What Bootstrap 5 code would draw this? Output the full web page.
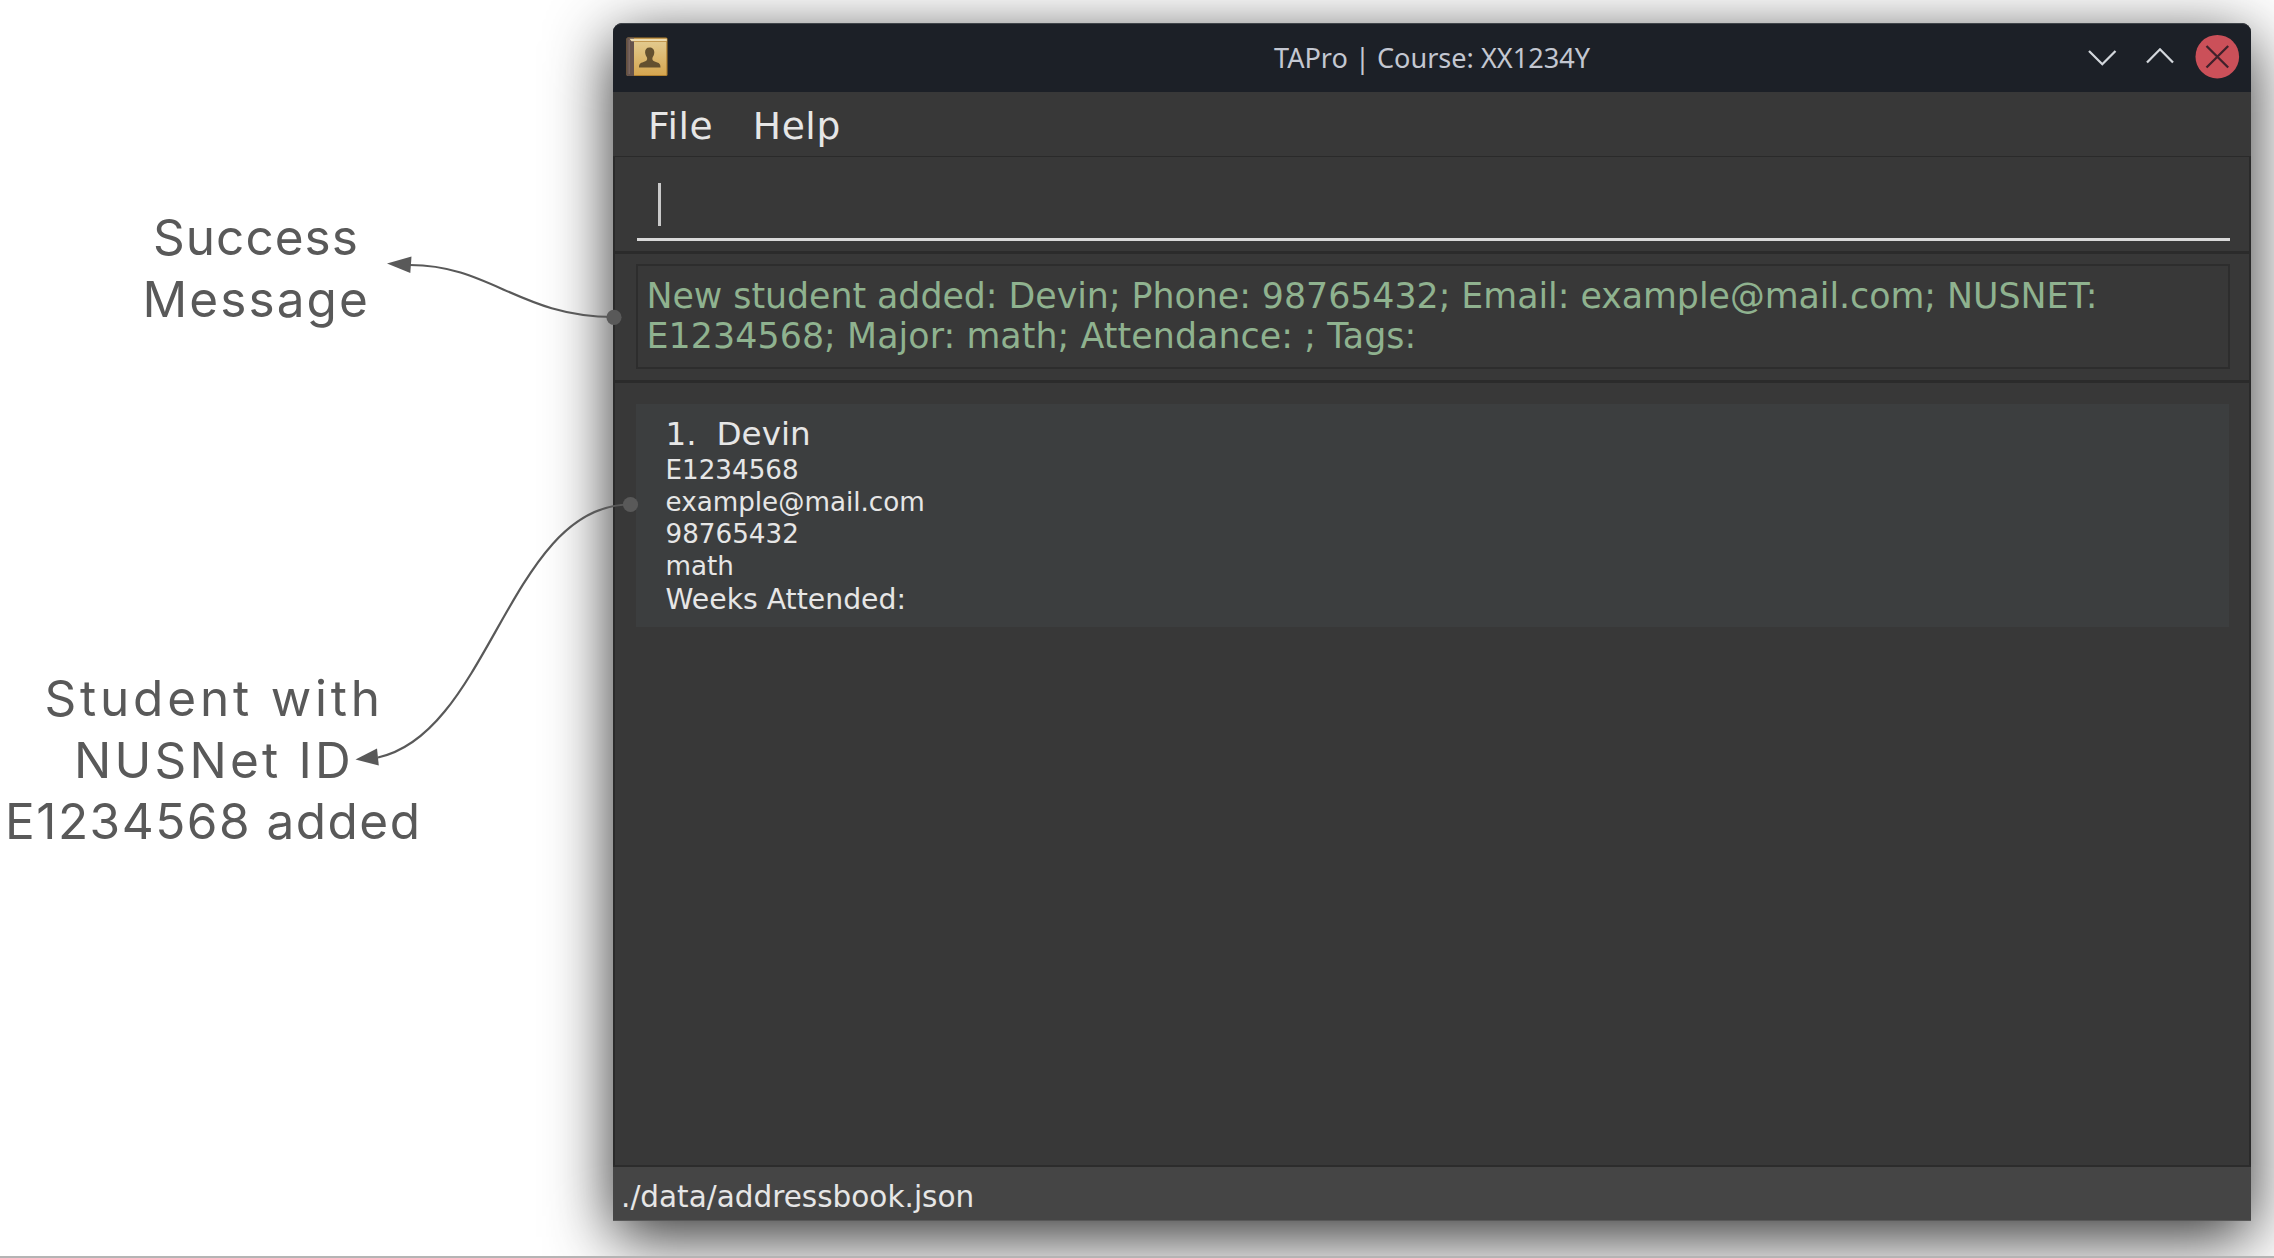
<!DOCTYPE html>
<html lang="en">
<head>
<meta charset="utf-8">
<title>TAPro</title>
<link href="https://cdn.jsdelivr.net/npm/bootstrap@5.3.0/dist/css/bootstrap.min.css" rel="stylesheet">
<script src="https://cdn.jsdelivr.net/npm/bootstrap@5.3.0/dist/js/bootstrap.bundle.min.js"></script>
<style>
  body { background: #fff; height: 1258px; font-family: "DejaVu Sans", sans-serif; }
  .stage { height: 1258px; border-bottom: 2px solid #b4b4b4; }
  .notes { width: 613px; font: 400 49.5px/61.5px "Inter", sans-serif; color: #595959; }
  .notes div { white-space: pre; }
  .note-success { padding-top: 207px; }
  .note-student { padding-top: 338px; }
  .n1 { padding-left: 153px; letter-spacing: 1.03px; }
  .n2 { padding-left: 142.5px; letter-spacing: 2.1px; }
  .n3 { padding-left: 44.5px; letter-spacing: 3.8px; }
  .n4 { padding-left: 74px; letter-spacing: 3.2px; }
  .n5 { padding-left: 5px; letter-spacing: 1.5px; }
  .app { width: 1638px; height: 1198px; margin-top: 23px; background: #383838; color: #e6e6e6;
         border-radius: 9px 9px 0 0; box-shadow: 0 16px 64px rgba(0,0,0,.82); }
  .titlebar { height: 69px; background: #1c2027; border-top: 1px solid #40454a; border-radius: 9px 9px 0 0;
              font: 27.1px/68px "Noto Sans", sans-serif; color: #c3c7d1; }
  .side { width: 182px; }
  .menu { height: 64px; padding: 4px 0 0 35px; gap: 39.5px; font-size: 37.6px; letter-spacing: .6px; }
  .panes { border: 1px solid #2a2a2a; border-width: 1px 2px 1px; border-bottom: 2px solid #2c2c2c; }
  .command { height: 94px; padding: 0 19px 10px 22px; border-bottom: 0; }
  .entry { height: 84px; border-bottom: 3px solid #d9d9d9; padding: 26px 0 0 21px; }
  .caret { width: 2.5px; height: 43px; background: #c9c9c9; }
  .split { height: 3px; background: #2b2b2b; }
  .result { height: 126px; padding: 10px 19px 11px 21px; }
  .result-box { height: 105px; border: 2px solid #2d2d2d; padding: 10px 8.5px; font-size: 34.8px; line-height: 40.2px; color: #8fb28f; }
  .line-a { letter-spacing: -.04px; }
  .line-b { letter-spacing: .08px; }
  .list-pane { padding: 21px 20px 0 21px; }
  .student { height: 223px; background: #3c3e3f; padding: 10px 0 0 29.5px; font-size: 26.2px; line-height: 32px; }
  .student-name { font-size: 32.6px; line-height: 40px; }
  .num { width: 51px; }
  .weeks { font-size: 28.3px; line-height: 36px; }
  .status { height: 54px; background: #454545; border-bottom: 1px solid #585858; padding: 7px 0 0 8px; font-size: 29.5px; line-height: 47px; }
</style>
</head>
<body class="overflow-hidden">
<div class="stage d-flex position-relative overflow-hidden">
  <aside class="notes flex-shrink-0">
    <div class="note-success"><div class="n1">Success</div><div class="n2">Message</div></div>
    <div class="note-student"><div class="n3">Student with</div><div class="n4">NUSNet ID</div><div class="n5">E1234568 added</div></div>
  </aside>
  <main class="app flex-shrink-0 d-flex flex-column">
    <header class="titlebar d-flex justify-content-between">
      <div class="side">
        <svg class="d-block" width="60" height="68" viewBox="0 0 60 68">
          <defs><linearGradient id="cover" x2="0" y2="1"><stop stop-color="#e2c98d"/><stop offset="1" stop-color="#d5a650"/></linearGradient></defs>
          <rect x="13.500" y="13.500" width="41" height="38.500" rx="1.500" fill="#b38230"/>
          <path d="M15 13.500H21V52H15q-1.500 0-1.500-1.500V15q0-1.500 1.500-1.500z" fill="#65534c"/>
          <rect x="15.500" y="16" width="1.500" height="34" fill="#79665f"/>
          <rect x="21" y="18" width="32.300" height="33" fill="url(#cover)"/>
          <path d="M16.500 14.800H53.800V17.200H18.500Z" fill="#eddcb0"/>
          <path d="M36.500 23.500c-3 0-4.600 2-4.400 5 .2 2.500 1.400 4 2 5.500.4 2-.6 3-3.600 4-3.500 1.200-4.500 2-4.500 5.500h21.500c0-3.500-1-4.300-4.500-5.500-3-1-4-2-3.600-4 .6-1.500 1.800-3 1.900-5.500.1-3-1.800-5-4.800-5z" fill="#63502f"/>
        </svg>
      </div>
      <div>TAPro | Course: XX1234Y</div>
      <div class="side">
        <svg class="d-block" width="182" height="68" viewBox="0 0 182 68" fill="none" stroke="#d3d7dc" stroke-width="2.3">
          <path d="M20 27L33.300 40.200L46.500 27M78 38.500L91 25.300L104 38.500"/>
          <circle cx="148.300" cy="32.700" r="21.800" fill="#cb5059" stroke="none"/>
          <path d="M137.500 22L159.200 43.500M159.200 22L137.500 43.500" stroke="#40212b"/>
        </svg>
      </div>
    </header>
    <nav class="menu d-flex align-items-center"><span>File</span><span>Help</span></nav>
    <section class="panes flex-grow-1">
      <div class="command"><div class="entry"><div class="caret"></div></div></div>
      <div class="split"></div>
      <div class="result"><div class="result-box"><div class="line-a text-nowrap">New student added: Devin; Phone: 98765432; Email: example@mail.com; NUSNET:</div><div class="line-b">E1234568; Major: math; Attendance: ; Tags:</div></div></div>
      <div class="split"></div>
      <div class="list-pane">
        <article class="student">
          <div class="student-name d-flex"><span class="num">1.</span><span>Devin</span></div>
          <div>E1234568</div><div>example@mail.com</div><div>98765432</div><div>math</div>
          <div class="weeks">Weeks Attended:</div>
        </article>
      </div>
    </section>
    <footer class="status">./data/addressbook.json</footer>
  </main>
  <svg class="position-absolute top-0 start-0" width="660" height="800" viewBox="0 0 660 800" fill="none" stroke="#595959" stroke-width="2.2">
    <path d="M410 265C490 265 520 317 614 317M378 757.500C490 733 510 504.500 630 504.500"/>
    <g fill="#595959" stroke="none">
      <path d="M387 263.500L411.500 256.500L410.300 273Z"/><path d="M355.500 759.500L377 748.500L378.800 765.500Z"/>
      <circle cx="614" cy="317.300" r="7.600"/><circle cx="630.500" cy="504.500" r="7.600"/>
    </g>
  </svg>
</div>
</body>
</html>
